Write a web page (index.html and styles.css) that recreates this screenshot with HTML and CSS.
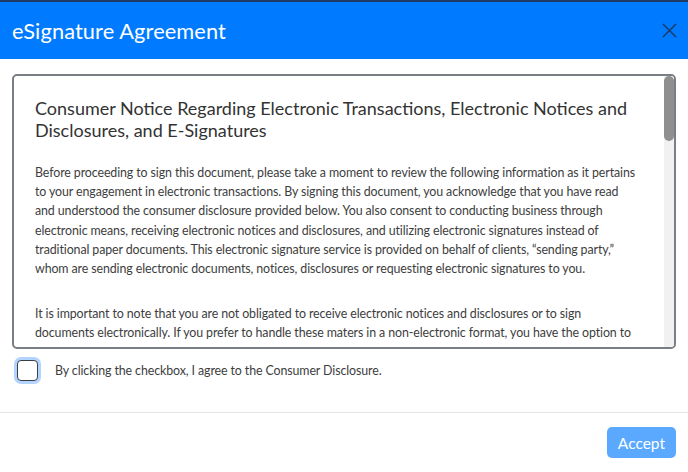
FILE: index.html
```html
<!DOCTYPE html>
<html lang="en">
<head>
    <title>eSignature Agreement</title>
    <link rel="stylesheet" href="styles.css">
</head>
<body>
    <div class="modal">
        <div class="modal-header">
            <h1>eSignature Agreement</h1>
            <button class="close" type="button" aria-label="Close">
                <svg width="15" height="15" viewBox="0 0 15 15"><path d="M1 1 L14 14 M14 1 L1 14" stroke="#1d3b66" stroke-width="1.5" fill="none"/></svg>
            </button>
        </div>
        <div class="modal-body">
            <div class="disclosure-box">
                <div class="disclosure">
                    <h2>Consumer Notice Regarding Electronic Transactions, Electronic Notices and Disclosures, and E-Signatures</h2>
                    <p>Before proceeding to sign this document, please take a moment to review the following information as it pertains<br>
                    to your engagement in electronic transactions. By signing this document, you acknowledge that you have read<br>
                    and understood the consumer disclosure provided below. You also consent to conducting business through<br>
                    electronic means, receiving electronic notices and disclosures, and utilizing electronic signatures instead of<br>
                    traditional paper documents. This electronic signature service is provided on behalf of clients, “sending party,”<br>
                    whom are sending electronic documents, notices, disclosures or requesting electronic signatures to you.</p>
                    <p>It is important to note that you are not obligated to receive electronic notices and disclosures or to sign<br>
                    documents electronically. If you prefer to handle these maters in a non-electronic format, you have the option to<br>
                    request paper copies and withdraw your consent at any time, as outlined further below.</p>
                </div>
                <div class="scrollbar"><div class="thumb"></div></div>
            </div>
            <label class="agree">
                <input type="checkbox" id="agree">
                <span>By clicking the checkbox, I agree to the Consumer Disclosure.</span>
            </label>
        </div>
        <div class="modal-footer">
            <button class="accept" type="button" disabled>Accept</button>
        </div>
    </div>
</body>
</html>
```

FILE: styles.css
```css
body {
    margin: 0;
    font-family: "Lato", "Open Sans", sans-serif;
    background-color: #fff;
    color: #333;
}
.modal {
    width: 688px;
    height: 472px;
    display: flex;
    flex-direction: column;
}
.modal-header {
    display: flex;
    align-items: center;
    justify-content: space-between;
    height: 57px;
    padding: 0 11px 0 12px;
    background-color: #007bff;
    border-top: 2px solid #1d3b66;
}
.modal-header h1 {
    margin: 0;
    font-size: 21.8px;
    font-weight: 400;
    color: #fff;
    letter-spacing: 0.1px;
}
.close {
    background: none;
    border: none;
    padding: 0;
    width: 15px;
    height: 15px;
    cursor: pointer;
}
.modal-body {
    padding: 15px 12px 0 12px;
}
.disclosure-box {
    display: flex;
    height: 271px;
    border: 2px solid #7a7f85;
    border-radius: 5px;
    overflow: hidden;
}
.disclosure {
    flex: 1;
    min-width: 0;
    overflow: hidden;
    padding: 0 2px 0 21px;
}
.scrollbar {
    width: 10px;
    flex-shrink: 0;
    background-color: #f1f1f1;
}
.thumb {
    height: 65px;
    background-color: #8f8f8f;
    border-radius: 5px;
}
.disclosure h2 {
    margin: 21px 0 0 0;
    padding-right: 12px;
    font-size: 18px;
    font-weight: 400;
    line-height: 22px;
    color: #333;
}
.disclosure p {
    margin: 22px 0 0 0;
    white-space: nowrap;
    font-size: 12.4px;
    letter-spacing: -0.1px;
    line-height: 19.2px;
    color: #3d3d3d;
}
.disclosure p + p {
    margin-top: 26px;
}
.agree {
    display: flex;
    align-items: center;
    gap: 17px;
    margin: 11px 0 0 5px;
    font-size: 12.4px;
    letter-spacing: -0.1px;
    color: #3d3d3d;
}
.agree input {
    appearance: none;
    margin: 0;
    width: 21px;
    height: 21px;
    border: 1.5px solid #3a3f45;
    border-radius: 4px;
    box-shadow: 0 0 0 3px #b3d4ff;
    background-color: #fff;
}
.modal-footer {
    margin-top: auto;
    border-top: 1px solid #e5e5e5;
    display: flex;
    justify-content: flex-end;
    padding: 14px 12px;
}
.accept {
    height: 31px;
    background-color: #5aa9ff;
    color: #fff;
    border: none;
    border-radius: 5px;
    font-family: inherit;
    font-size: 15.5px;
    padding: 0 11px;
}
```
